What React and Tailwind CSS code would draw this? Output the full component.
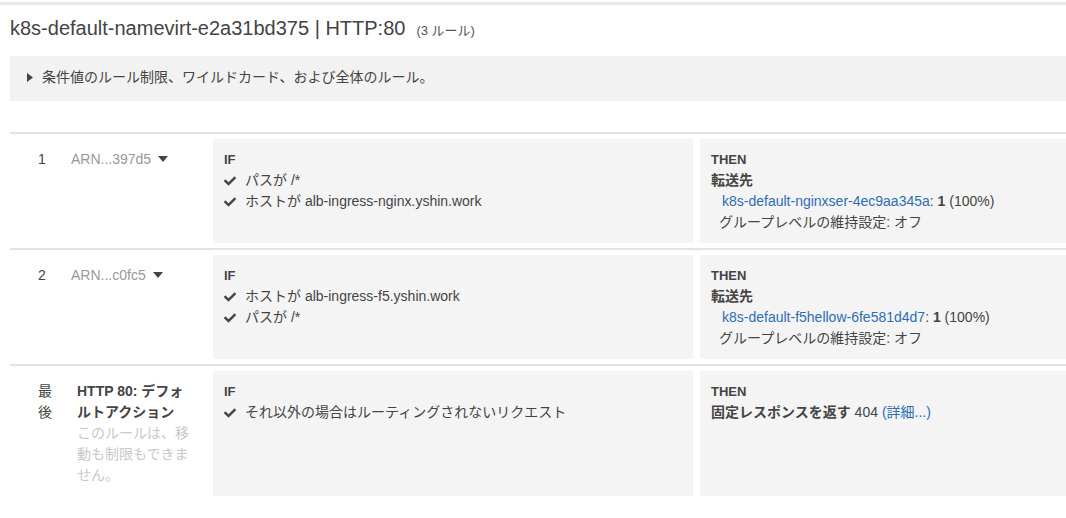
import React from "react";
import { FaCheck } from "react-icons/fa";

const font = { fontFamily: '"Liberation Sans", Arial, "Noto Sans CJK JP", sans-serif' };

function Caret() {
  return (
    <svg width="10" height="6" viewBox="0 0 10 6" className="inline-block ml-[7px] mb-[2px]">
      <path d="M0 0 L10 0 L5 6 Z" fill="#444" />
    </svg>
  );
}

function Check({ children }) {
  return (
    <div className="flex items-center">
      <FaCheck className="text-[#444] w-[12px] h-[12px] mr-[9px]" />
      <span>{children}</span>
    </div>
  );
}

function Box({ children, className = "" }) {
  return <div className={"bg-[#f4f4f4] px-[11px] py-[10px] " + className}>{children}</div>;
}

function Row({ left, ifContent, thenContent, last }) {
  return (
    <div className={"flex items-stretch border-t-2 border-[#e3e3e3] pt-[5px] " + (last ? "pb-0" : "pb-[5px]")}>
      {left}
      <Box className="w-[480px] shrink-0 min-h-[104px]">
        <div className="font-bold text-[13px]">IF</div>
        {ifContent}
      </Box>
      <div className="w-[7px] shrink-0" />
      <Box className="flex-1">
        <div className="font-bold text-[13px]">THEN</div>
        {thenContent}
      </Box>
    </div>
  );
}

export default function App() {
  return (
    <div style={font} className="w-[1066px] h-[518px] overflow-hidden bg-white text-[#444] text-[14px] leading-[21px]">
      <div className="h-[2px]" />
      <div className="h-[3px] bg-[#e8e8e8]" />
      <div className="pl-[10px]">
        <div className="flex items-baseline pt-[10px] h-[51px]">
          <span className="text-[20px] leading-[26px] text-[#444]">k8s-default-namevirt-e2a31bd375 | HTTP:80</span>
          <span className="text-[13px] ml-[11px] text-[#555]">(3 ルール)</span>
        </div>
        <div className="bg-[#f2f2f2] h-[45px] flex items-center pl-[17px] pb-[3px]">
          <svg width="6" height="9" viewBox="0 0 6 9" className="mr-[9px]">
            <path d="M0 0 L6 4.5 L0 9 Z" fill="#444" />
          </svg>
          <span>条件値のルール制限、ワイルドカード、および全体のルール。</span>
        </div>
        <div className="h-[31px]" />

        <Row
          left={
            <div className="flex w-[203px] shrink-0 py-[10px]">
              <div className="w-[33px] pl-[28px] box-content shrink-0">1</div>
              <div className="text-[#999]">
                ARN...397d5
                <Caret />
              </div>
            </div>
          }
          ifContent={
            <>
              <Check>パスが /*</Check>
              <Check>ホストが alb-ingress-nginx.yshin.work</Check>
            </>
          }
          thenContent={
            <>
              <div className="font-bold">転送先</div>
              <div className="pl-[11px]">
                <span className="text-[#2e6db4]">k8s-default-nginxser-4ec9aa345a</span>: <b>1</b> (100%)
              </div>
              <div className="pl-[8px]">グループレベルの維持設定: オフ</div>
            </>
          }
        />

        <Row
          left={
            <div className="flex w-[203px] shrink-0 py-[10px]">
              <div className="w-[33px] pl-[28px] box-content shrink-0">2</div>
              <div className="text-[#999]">
                ARN...c0fc5
                <Caret />
              </div>
            </div>
          }
          ifContent={
            <>
              <Check>ホストが alb-ingress-f5.yshin.work</Check>
              <Check>パスが /*</Check>
            </>
          }
          thenContent={
            <>
              <div className="font-bold">転送先</div>
              <div className="pl-[11px]">
                <span className="text-[#2e6db4]">k8s-default-f5hellow-6fe581d4d7</span>: <b>1</b> (100%)
              </div>
              <div className="pl-[8px]">グループレベルの維持設定: オフ</div>
            </>
          }
        />

        <Row
          last
          left={
            <div className="flex w-[203px] shrink-0 py-[10px]">
              <div className="pl-[28px] shrink-0">
                <div className="w-[14px] break-all">最後</div>
              </div>
              <div className="ml-[25px] w-[115px]">
                <div className="font-bold">HTTP 80: デフォルトアクション</div>
                <div className="text-[#c8c8c8]">このルールは、移動も制限もできません。</div>
              </div>
            </div>
          }
          ifContent={
            <>
              <Check>それ以外の場合はルーティングされないリクエスト</Check>
            </>
          }
          thenContent={
            <>
              <div>
                <b>固定レスポンスを返す</b> 404 <span className="text-[#2e6db4]">(詳細...)</span>
              </div>
            </>
          }
        />
      </div>
    </div>
  );
}
